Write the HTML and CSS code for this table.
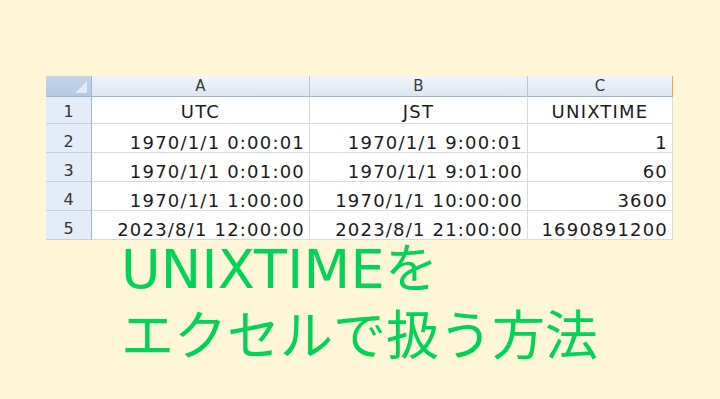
FILE: index.html
```html
<!DOCTYPE html>
<html lang="ja">
<head>
<meta charset="utf-8">
<link rel="stylesheet" href="styles.css">
</head>
<body>
<div class="page">
  <div class="sheet">
    <div class="corner"><span class="tri"></span></div>
    <div class="colhead">A</div>
    <div class="colhead">B</div>
    <div class="colhead last">C</div>

    <div class="rowhead r1">1</div>
    <div class="cell center r1">UTC</div>
    <div class="cell center r1">JST</div>
    <div class="cell center r1">UNIXTIME</div>

    <div class="rowhead">2</div>
    <div class="cell">1970/1/1 0:00:01</div>
    <div class="cell">1970/1/1 9:00:01</div>
    <div class="cell">1</div>

    <div class="rowhead">3</div>
    <div class="cell">1970/1/1 0:01:00</div>
    <div class="cell">1970/1/1 9:01:00</div>
    <div class="cell">60</div>

    <div class="rowhead">4</div>
    <div class="cell">1970/1/1 1:00:00</div>
    <div class="cell">1970/1/1 10:00:00</div>
    <div class="cell">3600</div>

    <div class="rowhead">5</div>
    <div class="cell">2023/8/1 12:00:00</div>
    <div class="cell">2023/8/1 21:00:00</div>
    <div class="cell">1690891200</div>
  </div>
  <h1 class="title"><span class="latin">UNIXTIME</span>を<br>エクセルで扱う方法</h1>
</div>
</body>
</html>
```

FILE: styles.css
```css
html, body {
  margin: 0;
  padding: 0;
  background: #fff6d8;
}
.page {
  width: 720px;
  height: 399px;
  padding: 76px 0 0 46px;
  box-sizing: border-box;
  overflow: hidden;
}
.sheet {
  display: grid;
  grid-template-columns: 46px 218px 218px 145px;
  grid-template-rows: 21px 27px 29px 29px 29px 29px;
  width: 627px;
  background: #ffffff;
  font-family: "DejaVu Sans", "Liberation Sans", sans-serif;
}
.corner {
  background: linear-gradient(#c3d4ea, #b4c8e2);
  border-right: 1px solid #9eb6ce;
  border-bottom: 1px solid #9eb6ce;
  box-sizing: border-box;
  position: relative;
}
.tri {
  position: absolute;
  right: 4px;
  bottom: 3px;
  width: 0;
  height: 0;
  border-left: 12px solid transparent;
  border-bottom: 12px solid #e3ebf5;
}
.colhead {
  background: linear-gradient(#f0f4fa, #dde6f1);
  border-right: 1px solid #b6c6da;
  border-bottom: 1px solid #9eb6ce;
  box-sizing: border-box;
  font-size: 15px;
  color: #3b3b3b;
  text-align: center;
  line-height: 20px;
}
.colhead.last {
  border-right: 1px solid #f4a050;
}
.rowhead {
  background: #e4ecf7;
  border-right: 1px solid #9eb6ce;
  border-bottom: 1px solid #c5d1e1;
  box-sizing: border-box;
  font-size: 16px;
  color: #333333;
  display: flex;
  align-items: flex-end;
  justify-content: center;
  line-height: 18px;
  padding-bottom: 1px;
}
.cell {
  border-right: 1px solid #d5dce8;
  border-bottom: 1px solid #d5dce8;
  box-sizing: border-box;
  font-size: 18px;
  letter-spacing: 1.2px;
  color: #1c1c1c;
  display: flex;
  align-items: flex-end;
  justify-content: flex-end;
  padding-right: 4px;
  line-height: 18px;
  white-space: nowrap;
}
.cell.center {
  justify-content: center;
  padding-right: 0;
}
.r1 {
  padding-bottom: 2px;
}
.title {
  margin: -6px 0 0 0;
  padding: 0 0 0 75px;
  font-family: "Noto Sans CJK JP", "Noto Sans", sans-serif;
  font-weight: 400;
  font-size: 53px;
  line-height: 62px;
  color: #00d457;
  white-space: nowrap;
}
.latin {
  font-family: "DejaVu Sans", "Noto Sans CJK JP", sans-serif;
  font-size: 54px;
  letter-spacing: 0.3px;
}
```
